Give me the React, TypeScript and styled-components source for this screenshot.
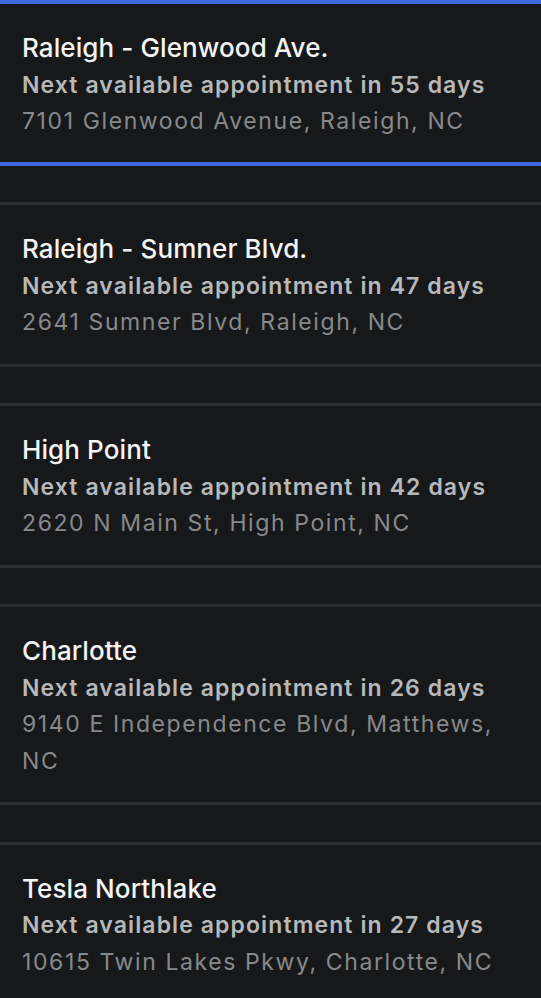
import React from "react";
import styled, { createGlobalStyle } from "styled-components";

interface Location {
  id: number;
  name: string;
  days: number;
  address: string;
}

const locations: Location[] = [
  { id: 1, name: "Raleigh - Glenwood Ave.", days: 55, address: "7101 Glenwood Avenue, Raleigh, NC" },
  { id: 2, name: "Raleigh - Sumner Blvd.", days: 47, address: "2641 Sumner Blvd, Raleigh, NC" },
  { id: 3, name: "High Point", days: 42, address: "2620 N Main St, High Point, NC" },
  { id: 4, name: "Charlotte", days: 26, address: "9140 E Independence Blvd, Matthews, NC" },
  { id: 5, name: "Tesla Northlake", days: 27, address: "10615 Twin Lakes Pkwy, Charlotte, NC" },
];

const App: React.FC = () => {
  const selectedId = 1;

  return (
    <>
      <GlobalStyle />
      <List>
        {locations.map((loc) => (
          <Card key={loc.id} selected={loc.id === selectedId}>
            <Title>{loc.name}</Title>
            <Availability>Next available appointment in {loc.days} days</Availability>
            <Address>{loc.address}</Address>
          </Card>
        ))}
      </List>
    </>
  );
};

export default App;

const GlobalStyle = createGlobalStyle`
  html, body {
    margin: 0;
    padding: 0;
    background: #17181a;
  }

  body {
    font-family: Inter, "Noto Sans", sans-serif;
    -webkit-font-smoothing: antialiased;
  }
`;

const List = styled.div`
  display: flex;
  flex-direction: column;
  gap: 36.5px;
  width: 541px;
  min-height: 998px;
  background: #17181a;
`;

const Card = styled.div<{ selected: boolean }>`
  display: flex;
  flex-direction: column;
  padding: ${(p) => (p.selected ? "26px 22px 22px" : "26px 22px 23px")};
  border-top: ${(p) => (p.selected ? "4px solid #3e6ae1" : "3px solid #2d2e30")};
  border-bottom: ${(p) => (p.selected ? "4px solid #3e6ae1" : "3px solid #2d2e30")};
  background: #17181a;
`;

const Line = styled.div`
  line-height: 36.5px;
  white-space: normal;
`;

const Title = styled(Line)`
  color: #f4f4f5;
  font-size: 26px;
  font-weight: 500;
  letter-spacing: 0.1px;
`;

const Availability = styled(Line)`
  color: #b7b8ba;
  font-size: 23px;
  font-weight: 600;
  letter-spacing: 1.1px;
`;

const Address = styled(Line)`
  color: #88898b;
  font-size: 23px;
  font-weight: 400;
  letter-spacing: 1.6px;
`;
